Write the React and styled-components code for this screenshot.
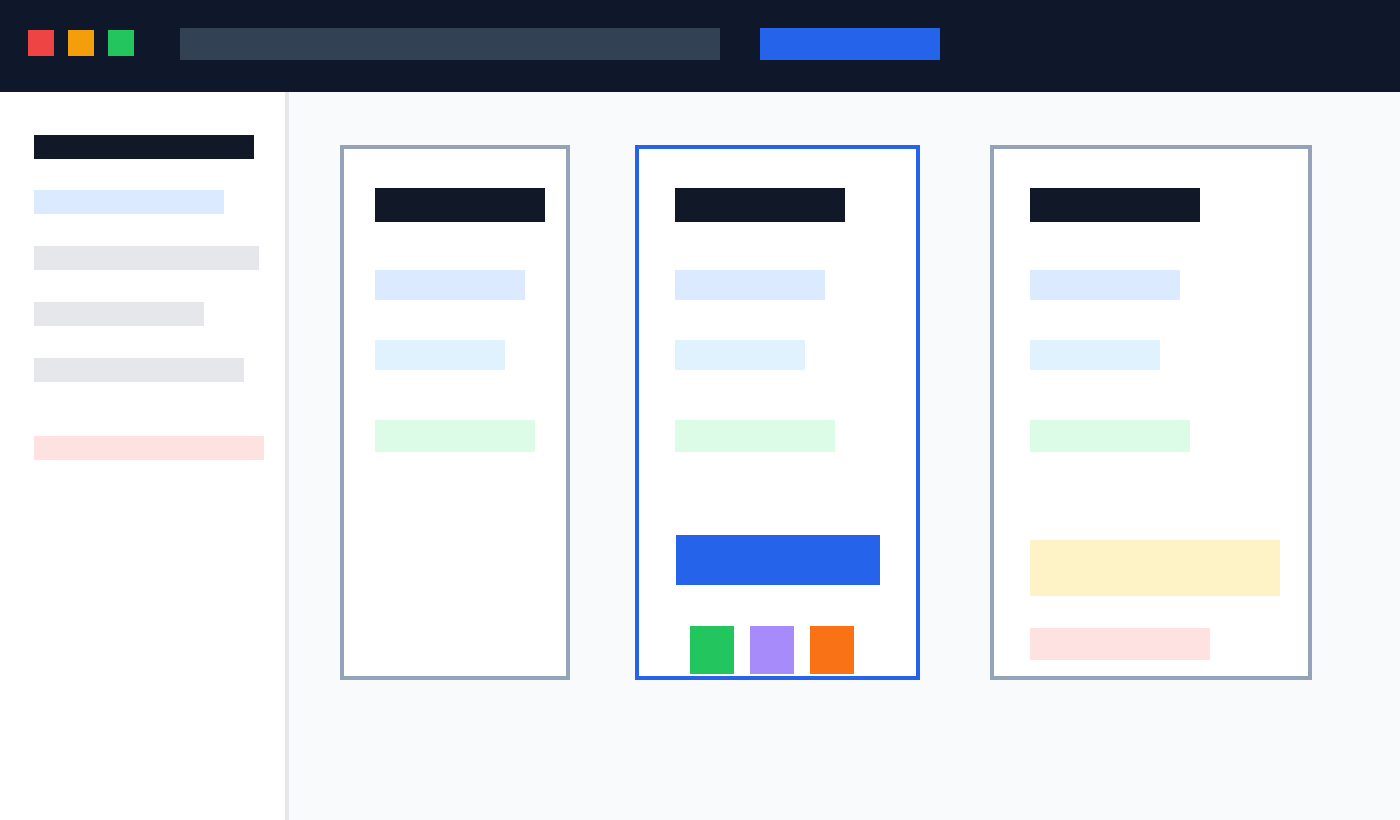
import React from "react";
import styled, { createGlobalStyle } from "styled-components";

const GlobalStyle = createGlobalStyle`
  html, body {
    margin: 0;
    padding: 0;
    background: #f8fafc;
    font-family: "Liberation Sans", Arial, sans-serif;
  }
`;

const navItems = [
  { width: 190, tone: "#dbeafe" },
  { width: 225, tone: "#e5e7eb" },
  { width: 170, tone: "#e5e7eb" },
  { width: 210, tone: "#e5e7eb" },
];

const cards = [
  { key: "basic", width: 230, pad: 35, outline: "#94a3b8" },
  { key: "pro", width: 285, pad: 40, outline: "#2563eb", featured: true },
  { key: "team", width: 322, pad: 40, outline: "#94a3b8", extra: true },
];

export default function App() {
  return (
    <Page>
      <GlobalStyle />
      <TopBar>
        <Dots>
          <Dot color="#ef4444" />
          <Dot color="#f59e0b" />
          <Dot color="#22c55e" />
        </Dots>
        <Search />
        <TopButton />
      </TopBar>
      <Body>
        <Sidebar>
          <SideTitle />
          {navItems.map((item, i) => (
            <NavItem key={i} $width={item.width} $tone={item.tone} />
          ))}
          <NavDanger />
        </Sidebar>
        <Main>
          {cards.map((card) => (
            <Card
              key={card.key}
              $width={card.width}
              $pad={card.pad}
              $outline={card.outline}
            >
              <CardTitle />
              <Line $width={150} $tone="#dbeafe" $top={48} />
              <Line $width={130} $tone="#e0f2fe" $top={40} />
              <Line $width={160} $tone="#dcfce7" $top={50} $height={32} />
              {card.featured && (
                <>
                  <CardButton />
                  <Swatches>
                    <Swatch color="#22c55e" />
                    <Swatch color="#a78bfa" />
                    <Swatch color="#f97316" />
                  </Swatches>
                </>
              )}
              {card.extra && (
                <>
                  <Notice />
                  <Line $width={180} $tone="#fee2e2" $top={32} $height={32} />
                </>
              )}
            </Card>
          ))}
        </Main>
      </Body>
    </Page>
  );
}

const Page = styled.div`
  width: 1400px;
  height: 820px;
  display: flex;
  flex-direction: column;
  overflow: hidden;
`;

const TopBar = styled.header`
  height: 92px;
  flex-shrink: 0;
  background: #0f172a;
  display: flex;
  align-items: flex-start;
  padding: 28px 0 0 28px;
  box-sizing: border-box;
`;

const Dots = styled.div`
  display: flex;
  gap: 14px;
  margin-top: 2px;
`;

const Dot = styled.span`
  width: 26px;
  height: 26px;
  background: ${(p) => p.color};
`;

const Search = styled.div`
  width: 540px;
  height: 32px;
  margin-left: 46px;
  background: #334155;
`;

const TopButton = styled.div`
  width: 180px;
  height: 32px;
  margin-left: 40px;
  background: #2563eb;
`;

const Body = styled.div`
  flex: 1;
  display: flex;
`;

const Sidebar = styled.aside`
  width: 251px;
  flex-shrink: 0;
  background: #ffffff;
  border-right: 4px solid #e5e7eb;
  padding: 43px 0 0 34px;
  display: flex;
  flex-direction: column;
  align-items: flex-start;
  gap: 32px;
`;

const SideTitle = styled.div`
  width: 220px;
  height: 24px;
  background: #111827;
  margin-bottom: -1px;
`;

const NavItem = styled.div`
  width: ${(p) => p.$width}px;
  height: 24px;
  background: ${(p) => p.$tone};
`;

const NavDanger = styled.div`
  width: 230px;
  height: 24px;
  margin-top: 22px;
  background: #fee2e2;
`;

const Main = styled.main`
  flex: 1;
  background: #f8fafc;
  display: flex;
  align-items: flex-start;
  padding: 53px 0 0 51px;
  gap: 65px;

  & > :last-child {
    margin-left: 5px;
  }
`;

const Card = styled.section`
  width: ${(p) => p.$width}px;
  height: 535px;
  box-sizing: border-box;
  background: #ffffff;
  border: 4px solid ${(p) => p.$outline};
  padding: 39px 0 0 ${(p) => p.$pad - 4}px;
  display: flex;
  flex-direction: column;
  align-items: flex-start;
`;

const CardTitle = styled.div`
  width: 170px;
  height: 34px;
  background: #111827;
`;

const Line = styled.div`
  width: ${(p) => p.$width}px;
  height: ${(p) => p.$height || 30}px;
  margin-top: ${(p) => p.$top}px;
  background: ${(p) => p.$tone};
`;

const CardButton = styled.div`
  width: 204px;
  height: 50px;
  margin: 83px 0 0 1px;
  background: #2563eb;
`;

const Swatches = styled.div`
  display: flex;
  gap: 16px;
  margin: 41px 0 0 15px;
`;

const Swatch = styled.span`
  width: 44px;
  height: 48px;
  background: ${(p) => p.color};
`;

const Notice = styled.div`
  width: 250px;
  height: 56px;
  margin-top: 88px;
  background: #fef3c7;
`;
